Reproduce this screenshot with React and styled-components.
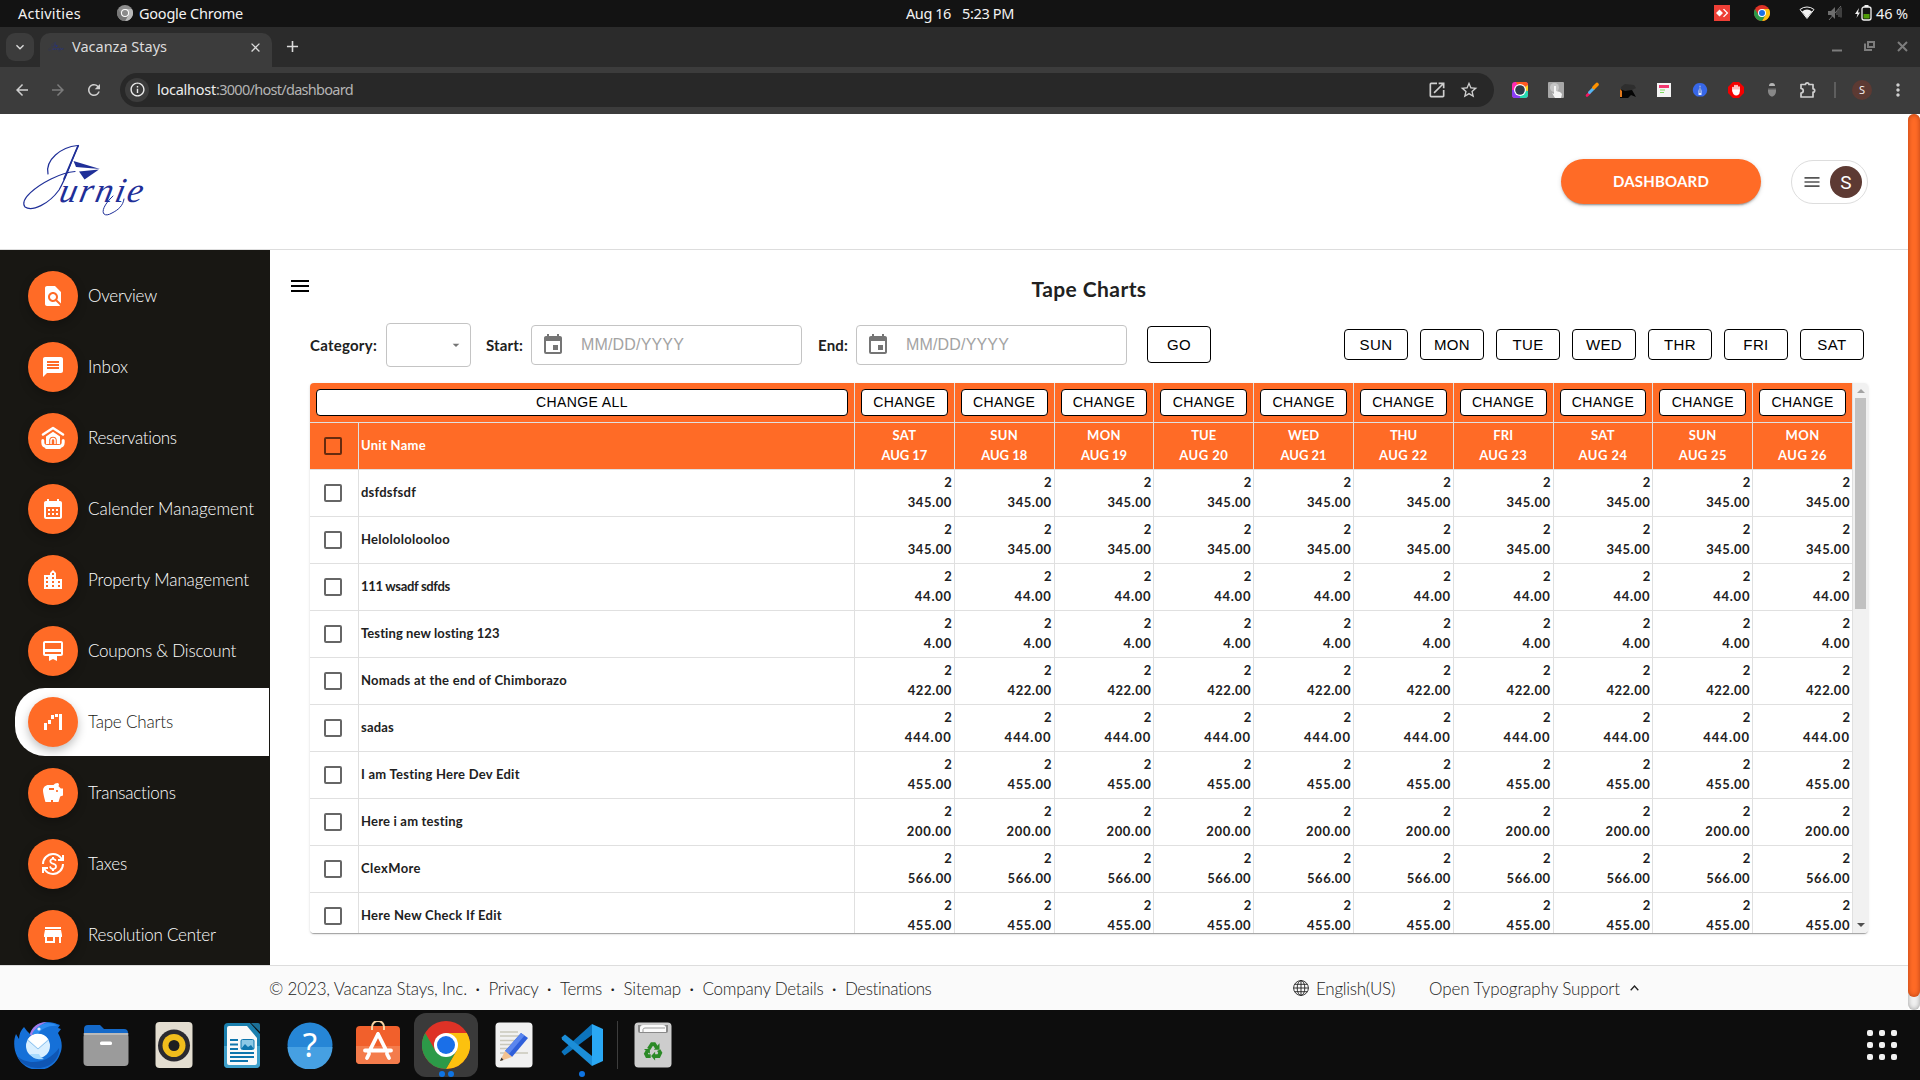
import React, { useLayoutEffect, useRef, useState } from "react";
import styled, { createGlobalStyle, css } from "styled-components";
import {
  MdFindInPage, MdMessage, MdCalendarMonth, MdLocationCity, MdCardMembership,
  MdWaterfallChart, MdSavings, MdCurrencyExchange, MdStore, MdEvent, MdMenu,
  MdArrowBack, MdArrowForward, MdRefresh, MdInfoOutline, MdOpenInNew, MdStarBorder,
  MdMoreVert, MdClose, MdAdd, MdExpandMore, MdArrowDropDown,
} from "react-icons/md";

const Global = createGlobalStyle`
  *, *::before, *::after { box-sizing: border-box; }
  body { margin: 0; overflow: hidden; background: #fff; }
  button { font: inherit; margin: 0; padding: 0; cursor: pointer; }
  svg { display: block; flex: none; }
`;

const ORANGE = "#ff6b26";
const LINE = "#e0e0e0";
const brand = css`font-family: Lato, "Open Sans", sans-serif;`;
const system = css`font-family: "Noto Sans", "Open Sans", sans-serif;`;
const arial = css`font-family: "Liberation Sans", Arial, sans-serif;`;

/* Tracks its text out or in so that the label fills a given width. */
const FitSpan = styled.span`
  display: inline-block;
  white-space: pre;
`;
function Fit({ w, children }) {
  const ref = useRef(null);
  const [spacing, setSpacing] = useState(0);
  useLayoutEffect(() => {
    const el = ref.current;
    const before = el.style.letterSpacing;
    el.style.letterSpacing = "0px";
    const natural = el.getBoundingClientRect().width;
    el.style.letterSpacing = before;
    setSpacing((w - natural) / Math.max(1, el.textContent.length));
  }, [w, children]);
  return <FitSpan ref={ref} style={{ letterSpacing: `${spacing}px` }}>{children}</FitSpan>;
}

const Screen = styled.div`
  width: 1920px;
  height: 1080px;
  display: flex;
  flex-direction: column;
  overflow: hidden;
`;

/* ---------- desktop bar ---------- */
const DesktopBar = styled.div`
  ${system}
  height: 27px;
  padding-bottom: 1px;
  background: #131313;
  color: #f2f2f2;
  font-size: 14.5px;
  display: grid;
  grid-template-columns: 1fr auto 1fr;
  align-items: center;
`;
const BarSide = styled.div`
  display: flex;
  align-items: center;
  gap: ${(p) => p.$gap}px;
  padding: ${(p) => p.$pad};
  justify-content: ${(p) => (p.$end ? "flex-end" : "flex-start")};
`;

/* ---------- browser ---------- */
const TabStrip = styled.div`
  ${system}
  height: 40px;
  background: #2b2b2b;
  display: flex;
  align-items: flex-start;
  padding: 6px 12px 0 6px;
  color: #dcdcdc;
`;
const TabSearch = styled.div`
  width: 28px;
  height: 28px;
  border-radius: 9px;
  background: #3c3c3c;
  display: grid;
  place-items: center;
`;
const Tab = styled.div`
  width: 232px;
  height: 34px;
  margin-left: 6px;
  padding: 0 9px 6px 8px;
  border-radius: 10px 10px 0 0;
  background: #3c3c3c;
  display: flex;
  align-items: center;
  gap: 8px;
  font-size: 14.5px;
`;
const TabTitle = styled.div`flex: 1; padding-bottom: 2px;`;
const NewTab = styled.div`margin: 4px 0 0 11px;`;
const WindowButtons = styled.div`
  margin: 8px 0 0 auto;
  display: flex;
  align-items: center;
  gap: 21px;
`;
const Toolbar = styled.div`
  ${system}
  height: 47px;
  background: #3c3c3c;
  display: flex;
  align-items: center;
  padding: 0 0 2px 4px;
`;
const NavSlot = styled.div`
  width: 36px;
  margin-left: ${(p) => p.$ml || 0}px;
  display: grid;
  place-items: center;
  color: ${(p) => (p.$dim ? "#7b7b7b" : "#cfcfcf")};
`;
const UrlBar = styled.div`
  width: 1374px;
  height: 34px;
  margin-left: 8px;
  margin-right: 8px;
  padding: 0 15px 0 5px;
  border-radius: 17px;
  background: #282828;
  display: flex;
  align-items: center;
  color: #ececec;
  font-size: 14.5px;
`;
const InfoDot = styled.div`
  width: 24px;
  height: 24px;
  margin-right: 8px;
  border-radius: 50%;
  background: #3c3c3c;
  display: grid;
  place-items: center;
`;
const UrlHost = styled.span`padding-bottom: 1px;`;
const UrlPath = styled.span`flex: 1; padding-bottom: 1px; color: #b4b4b4;`;
const UrlActions = styled.div`display: flex; gap: 12px; color: #cfcfcf;`;
const Divider = styled.div`width: 2px; height: 16px; margin: 0 16px 0 8px; background: #5e5e5e;`;
const Profile = styled.div`
  width: 20px;
  height: 20px;
  border-radius: 50%;
  background: #5d3a33;
  color: #f5eeec;
  font-size: 11px;
  line-height: 20px;
  text-align: center;
`;

/* ---------- page ---------- */
const Viewport = styled.div`
  height: 896px;
  display: flex;
  background: #fff;
`;
const Page = styled.div`
  width: 1908px;
  display: flex;
  flex-direction: column;
`;
const PageScroll = styled.div`
  width: 12px;
  border-radius: 10px;
  background: #f1f1f1;
  box-shadow: inset 0 0 5px #9a9a9a;
`;
const PageThumb = styled.div`
  height: 883px;
  border-radius: 10px;
  background: ${ORANGE};
  box-shadow: inset 0 0 5px rgba(120, 30, 0, 0.55);
`;
const Header = styled.header`
  height: 136px;
  border-bottom: 1px solid #dddddd;
  display: flex;
  align-items: center;
  padding: 0 40px 0 20px;
`;
const LogoLink = styled.div`padding-bottom: 3px;`;
const DashboardButton = styled.button`
  ${brand}
  width: 200px;
  height: 45px;
  margin-left: auto;
  margin-right: 30px;
  padding-bottom: 2px;
  border: 0;
  border-radius: 23px;
  background: ${ORANGE};
  color: #fff;
  font-size: 15px;
  font-weight: 700;
  box-shadow: 0 3px 1px -2px rgba(0,0,0,.2), 0 2px 2px rgba(0,0,0,.14), 0 1px 5px rgba(0,0,0,.12);
`;
const AccountPill = styled.div`
  width: 77px;
  height: 44px;
  padding: 0 5px 0 10px;
  border: 1px solid #dddddd;
  border-radius: 22px;
  display: flex;
  align-items: center;
  justify-content: space-between;
  color: #555;
`;
const Avatar = styled.div`
  width: 32px;
  height: 32px;
  border-radius: 50%;
  background: #5d3a33;
  color: #fff;
  font: 19px/33px Roboto, sans-serif;
  text-align: center;
`;
const Body = styled.div`
  height: 715px;
  display: flex;
  overflow: hidden;
`;
const Sidebar = styled.nav`
  ${brand}
  width: 270px;
  padding: 12px 1px 0 15px;
  background: #181713;
  display: flex;
  flex-direction: column;
  gap: 3px;
  overflow: hidden;
`;
const NavItem = styled.div`
  height: 68px;
  flex: none;
  padding-left: 13px;
  border-radius: 30px 0 0 30px;
  display: flex;
  align-items: center;
  gap: 10px;
  font-size: 17px;
  font-weight: 300;
  color: ${(p) => (p.$active ? "#181713" : "#fff")};
  background: ${(p) => (p.$active ? "#fff" : "transparent")};
`;
const NavLabel = styled.span`padding-bottom: 1px;`;
const NavIcon = styled.div`
  width: 50px;
  height: 50px;
  border-radius: 50%;
  background: ${ORANGE};
  color: #fff;
  display: grid;
  place-items: center;
  box-shadow: 0 4px 10px rgba(0, 0, 0, 0.25);
`;
const Main = styled.main`
  flex: 1;
  display: flex;
  flex-direction: column;
  padding: 0 40px 0 40px;
`;
const TitleRow = styled.div`
  height: 73px;
  margin: 0 -40px;
  display: grid;
  grid-template-columns: 1fr auto 1fr;
  align-items: start;
`;
const MenuToggle = styled.div`padding: 24px 0 0 18px; color: #000;`;
const Title = styled.h1`
  ${brand}
  margin: 0;
  padding-top: 25px;
  font-size: 21px;
  line-height: 28px;
  font-weight: 700;
  color: #212121;
`;
const Filters = styled.div`
  height: 44px;
  padding-right: 4px;
  display: flex;
  align-items: center;
`;
const FilterLabel = styled.label`
  ${brand}
  width: ${(p) => p.$w}px;
  margin-right: ${(p) => p.$gap}px;
  padding-bottom: 1px;
  font-size: 15px;
  font-weight: 700;
  color: #212121;
`;
const Select = styled.div`
  width: 85px;
  height: 44px;
  margin-right: 15px;
  padding-right: 6px;
  border: 1px solid #c4c4c4;
  border-radius: 4px;
  display: flex;
  align-items: center;
  justify-content: flex-end;
  color: #757575;
`;
const DateBox = styled.div`
  ${arial}
  width: 271px;
  height: 40px;
  margin-right: ${(p) => p.$gap}px;
  padding: 0 9px;
  border: 1px solid #c4c4c4;
  border-radius: 4px;
  display: flex;
  align-items: center;
  gap: 16px;
  font-size: 16px;
  color: #a3a3a3;
  svg { color: #757575; }
`;
const OutlineButton = styled.button`
  ${arial}
  width: ${(p) => p.$w || "100%"};
  height: ${(p) => p.$h}px;
  padding-bottom: 1px;
  border: 1px solid #000;
  border-radius: 4px;
  background: #fff;
  color: #000;
  font-size: ${(p) => p.$size || 15}px;
  font-weight: 400;
  letter-spacing: 0.4px;
`;
const GoSlot = styled.div`padding-bottom: 1px; display: flex;`;
const Days = styled.div`margin-left: auto; padding-bottom: 1px; display: flex; gap: 12px;`;

const TableCard = styled.div`
  height: 550px;
  margin-top: 16px;
  border-radius: 4px;
  overflow: hidden;
  display: flex;
  background: #fff;
  box-shadow: 0 2px 1px -1px rgba(0,0,0,.2), 0 1px 1px rgba(0,0,0,.14), 0 1px 3px rgba(0,0,0,.12);
`;
const Table = styled.div`
  width: 1543px;
  ${brand}
  font-size: 13px;
  font-weight: 700;
  color: #212121;
`;
const Row = styled.div`
  display: grid;
  grid-template-columns: ${(p) => (p.$wide ? "545px" : "49px 496px")} repeat(10, 1fr);
  height: ${(p) => p.$h}px;
  background: ${(p) => (p.$head ? ORANGE : "#fff")};
  color: ${(p) => (p.$head ? "#fff" : "inherit")};
`;
const Cell = styled.div`
  min-width: 0;
  border-right: 1px solid ${LINE};
  border-bottom: 1px solid ${LINE};
  padding: ${(p) => p.$pad || "0"};
  display: flex;
  flex-direction: ${(p) => (p.$stack ? "column" : "row")};
  align-items: ${(p) => p.$align || "center"};
  justify-content: ${(p) => (p.$stack ? "center" : "flex-start")};
  line-height: 20px;
`;
const Check = styled.div`
  width: 18px;
  height: 18px;
  border: 2px solid rgba(0, 0, 0, 0.6);
  border-radius: 2px;
`;
const TableScroll = styled.div`
  width: 15px;
  background: #f1f1f1;
  display: flex;
  flex-direction: column;
  align-items: center;
`;
const ScrollArrow = styled.div`
  width: 0;
  border: 4px solid transparent;
  ${(p) => p.$up
    ? "border-top: 0; border-bottom-color: #a3a3a3; margin: 6px 0 5px;"
    : "border-bottom: 0; border-top-color: #505050; margin: auto 0 6px;"}
`;
const TableThumb = styled.div`width: 11px; height: 211px; background: #c1c1c1;`;

const Footer = styled.footer`
  ${brand}
  height: 45px;
  border-top: 1px solid #dddddd;
  background: #fafafa;
  color: #222;
  font-size: 17px;
  font-weight: 300;
  display: flex;
  align-items: center;
  padding: 0 269px 0 269px;
`;
const FooterLinks = styled.div`display: flex; align-items: center;`;
const Dot = styled.span`width: 21.5px; text-align: center; font-weight: 400;`;
const FooterRight = styled.div`
  margin-left: auto;
  display: flex;
  align-items: center;
`;

/* ---------- dock ---------- */
const Dock = styled.div`
  height: 70px;
  background: #0d0d0d;
  display: flex;
  align-items: center;
  padding: 0 23px 0 4px;
`;
const DockSlot = styled.div`
  position: relative;
  width: 68px;
  height: 70px;
  display: grid;
  place-items: center;
`;
const ActiveTile = styled.div`
  width: 64px;
  height: 64px;
  border-radius: 12px;
  background: #3a3a3a;
  display: grid;
  place-items: center;
`;
const Running = styled.div`
  position: absolute;
  bottom: 3px;
  left: 0;
  right: 0;
  display: flex;
  justify-content: center;
  gap: 3px;
`;
const RunningDot = styled.i`width: 6px; height: 6px; border-radius: 50%; background: #0e74e4;`;
const DockRule = styled.div`width: 1px; height: 48px; background: #3d3d3d; margin: 0 1px;`;
const AppsGrid = styled.div`
  margin-left: auto;
  display: grid;
  grid-template-columns: repeat(3, 6px);
  gap: 6px;
  width: 30px;
`;
const AppsDot = styled.i`width: 6px; height: 6px; border-radius: 2px; background: #f2f2f2;`;

/* ---------- drawings ---------- */
const Chrome = ({ size, gray }) => {
  const [r, y, g, b] = gray ? ["#8d8d8d", "#b9b9b9", "#777", "#8a8a8a"] : ["#de3226", "#fcc10f", "#2c9a48", "#1a6fe8"];
  return (
    <svg width={size} height={size} viewBox="0 0 48 48">
      <circle cx="24" cy="24" r="24" fill={r} />
      <path d="M24 12h20.8A24 24 0 0 1 24 48l10.4-18z" fill={y} />
      <path d="M3.2 12A24 24 0 0 0 24 48l10.4-18L24 34 13.6 30z" fill={g} />
      <circle cx="24" cy="24" r="12" fill="#fff" />
      <circle cx="24" cy="24" r="9" fill={b} />
    </svg>
  );
};

const Logo = ({ width = 126, height = 80 }) => (
  <svg width={width} height={height} viewBox="0 0 126 80" fill="none" stroke="#1f2f98" strokeLinecap="round">
    <path d="M28 34C25 20 41 7 57.500 5.500" strokeWidth="1.200" />
    <path d="M58.500 5.500C51 20 48 35 39 50C29 64 12 72 5 67C-1 59 17 46 31 39C39 35 47 32 55 31.500" strokeWidth="1.200" />
    <path d="M58 6L44 39" strokeWidth="1.800" />
    <path d="M53.500 21L80 29L62 27.500L56 27Z" fill="#1f2f98" stroke="none" />
    <path d="M59 31.500L79 29.500L64.500 39.500Z" fill="#1f2f98" stroke="none" />
    <path d="M93 56C78 70 82 79 92 73C98 70 103 66 104 59" strokeWidth="1" />
    <text transform="translate(38 62) skewX(-12)" fill="#1f2f98" stroke="none" fontFamily="Liberation Serif, serif" fontStyle="italic" fontSize="35" textLength="83">urnie</text>
  </svg>
);

const PuzzleIcon = () => (
  <svg width="18" height="18" viewBox="0 0 18 18" fill="none" stroke="currentColor" strokeWidth="1.700" strokeLinejoin="round">
    <path d="M2 3.500h4.500a1.700 1.700 0 0 1 3.400 0H14v4.300a1.700 1.700 0 0 1 0 3.400V16H2v-3.800c3-.6 3-4.200 0-4.800z" />
  </svg>
);

const HouseIcon = () => (
  <svg width="24" height="24" viewBox="0 0 24 24" fill="none" stroke="#fff">
    <path d="M2 8.500L12 2l10 6.500" strokeWidth="2.600" strokeLinecap="round" strokeLinejoin="round" />
    <path d="M5 18v-7.500L12 5.800l7 4.700V18h-3.200v-3.500a3.800 3.800 0 0 0-7.600 0V18z" fill="#fff" stroke="none" />
    <path d="M10 18v-3.500a2 2 0 0 1 4 0V18" strokeWidth="1.500" />
    <path d="M1.800 14.500v2c0 3 2 4 4.700 4h11c2.700 0 4.700-1 4.700-4v-2" strokeWidth="3" strokeLinecap="round" />
    <path d="M5.500 21.500h13" strokeWidth="3" strokeLinecap="round" />
  </svg>
);

const Globe = () => (
  <svg width="16" height="16" viewBox="0 0 16 16" fill="none" stroke="#222" strokeWidth="0.900">
    <circle cx="8" cy="8" r="7.400" />
    <ellipse cx="8" cy="8" rx="3.800" ry="7.400" />
    <path d="M8 .5v15M.5 8h15M1.800 4.300h12.400M1.800 11.700h12.400" />
  </svg>
);

const Thunderbird = () => (
  <svg width="48" height="48" viewBox="0 0 48 48">
    <path d="M10 6c2 3 4 5 6 7 2-7 8-12 17-12 5 0 8 1 10 2l3 1-2 3 3 1-3 4c4 7 5 14 2 21a23 23 0 0 1-43 2C0 29-1 20 2 13l3 5c0-5 2-9 5-12z" fill="#1570d8" />
    <path d="M16 13c2-7 8-12 17-12-5 2-8 4-10 8l-6 6z" fill="#a77be8" />
    <path d="M18 13c3-6 8-10 16-11 4 0 7 1 10 3-8-1-16 2-20 8z" fill="#2d8cf0" />
    <path d="M3 35c9 9 30 9 42-8 1 10-8 20-21 20-9 0-17-4-21-12z" fill="#0f56b4" />
    <circle cx="25" cy="8" r="1.600" fill="#e9f4ff" />
    <circle cx="24" cy="25" r="12" fill="#d9efff" />
    <path d="M16 33c3 5 9 6 14 5-3-1-4-3-5-5z" fill="#a9dcff" />
    <path d="M14 18l10 9 10-9c-4-7-16-7-20 0z" fill="#fff" />
    <path d="M13.500 19L24 28l10.500-9" stroke="#8fc2ee" fill="none" />
  </svg>
);
const FilesIcon = () => (
  <svg width="48" height="48" viewBox="0 0 48 48">
    <path d="M2 8a4 4 0 0 1 4-4h12l4 4h20a4 4 0 0 1 4 4v8H2z" fill="#1469c9" />
    <rect x="1.500" y="12" width="45" height="33" rx="4" fill="#9b9b9b" />
    <rect x="1.500" y="12" width="45" height="2" rx="1" fill="#b9b9b9" />
    <rect x="18" y="20.500" width="12" height="3.500" rx="1.500" fill="#fff" />
  </svg>
);
const SpeakerIcon = () => (
  <svg width="48" height="48" viewBox="0 0 48 48">
    <rect x="5.500" y="1" width="37" height="46" rx="4" fill="#e3ddd0" />
    <circle cx="24" cy="24.500" r="16" fill="#2a2a30" />
    <circle cx="24" cy="24.500" r="11.500" fill="#f0bd1c" />
    <circle cx="24" cy="24.500" r="5.500" fill="#1e1e20" />
  </svg>
);
const WriterIcon = () => (
  <svg width="48" height="48" viewBox="0 0 48 48">
    <path d="M10 2h22l10 11v30a4 4 0 0 1-4 4H10a4 4 0 0 1-4-4V6a4 4 0 0 1 4-4z" fill="#1a7fae" />
    <path d="M6 25h36v18a4 4 0 0 1-4 4H10a4 4 0 0 1-4-4z" fill="#3e9fca" />
    <path d="M33 2h7a2 2 0 0 1 2 2v7z" fill="#1c6f96" />
    <path d="M11 5h18l10 12v25a2 2 0 0 1-2 2H11a2 2 0 0 1-2-2V7a2 2 0 0 1 2-2z" fill="#fafafa" />
    <path d="M12 19h8M12 23.500h8M12 28h8M12 32h24M12 36h24M12 40h18" stroke="#0f76ae" strokeWidth="2" />
    <rect x="23" y="18.500" width="13" height="10" rx="1.500" fill="#8cc8e6" stroke="#0f76ae" />
    <path d="M23 28l4-5 3 3 3-2 3 4z" fill="#0f76ae" />
  </svg>
);
const HelpIcon = () => (
  <svg width="48" height="48" viewBox="0 0 48 48">
    <circle cx="24" cy="24" r="22.500" fill="#2686d6" />
    <path d="M1.500 26a22.500 22.500 0 0 0 45 0z" fill="#46a0e2" />
    <text x="24" y="36" textAnchor="middle" fill="#fff" fontFamily="Noto Sans, sans-serif" fontSize="33">?</text>
  </svg>
);
const SoftwareIcon = () => (
  <svg width="48" height="48" viewBox="0 0 48 48">
    <rect x="2" y="5" width="44" height="38" rx="4" fill="#f1602c" />
    <path d="M2 25h44v14a4 4 0 0 1-4 4H6a4 4 0 0 1-4-4z" fill="#f47c4c" />
    <path d="M18 9V6a6 6 0 0 1 12 0v3" fill="none" stroke="#f8d3a2" strokeWidth="2" />
    <path d="M24 13l-9 18M24 13l9 18M11 29.500h26M15 33l-2 4M33 33l2 4" fill="none" stroke="#fff" strokeWidth="3.800" strokeLinecap="round" />
  </svg>
);
const EditorIcon = () => (
  <svg width="48" height="48" viewBox="0 0 48 48">
    <rect x="5.500" y="1.500" width="37" height="45" rx="4" fill="#f1f1f1" />
    <path d="M10 11h18M10 15h22M10 19.500h18M10 23.500h16M10 27.500h12M10 32h28" stroke="#c9c8bb" strokeWidth="1.600" />
    <path d="M31 12l7 5-16 19-7-6z" fill="#2f5fda" />
    <path d="M31 12l3.500 2.500-16 19L15 30z" fill="#5b86ee" />
    <path d="M15 30l7 6-12 4z" fill="#f3c291" />
    <path d="M11.500 36.500L10 40l3.500-1z" fill="#333" />
  </svg>
);
const CodeIcon = () => (
  <svg width="44" height="44" viewBox="0 0 44 44">
    <path d="M1.500 29l3 3.500L32 12V1L2 28z" fill="#0c74bd" />
    <path d="M1.500 14.500l3.500-3L32 33v10L2 16.500z" fill="#1b8ed8" />
    <path d="M32 1l11 5v32l-11 5z" fill="#2aa8f4" />
  </svg>
);
const TrashIcon = () => (
  <svg width="48" height="48" viewBox="0 0 48 48">
    <rect x="5.500" y="1.500" width="37" height="45" rx="4" fill="#cdcdcd" />
    <path d="M9 4h30v6a2 2 0 0 1-2 2H11a2 2 0 0 1-2-2z" fill="#8a8a8a" />
    <path d="M11 11V7a3 3 0 0 1 3-3h20a3 3 0 0 1 3 3v4z" fill="#fafafa" />
    <path d="M14 11V8.500a2 2 0 0 1 2-1.500h20" fill="none" stroke="#999" />
    <g transform="translate(4.500 5.500) scale(.8)">
      <g fill="none" stroke="#2c8a27" strokeWidth="4.600">
        <path d="M19 28l4-6h3l3 4.500" />
        <path d="M31.500 29.500l2 3.500-2 4h-5" />
        <path d="M21.500 37H17l-1.500-3 2-3.500" />
      </g>
      <path d="M32.500 21v8h-7zM27 31.500v11l-5-5.500zM13 28h7.500v6z" fill="#2c8a27" />
    </g>
  </svg>
);

const extensions = [
  <svg key="cam" width="16" height="16" viewBox="0 0 16 16">
    <rect width="16" height="16" rx="3" fill="#ff2bb0" />
    <path d="M8 8L4 0h9a3 3 0 0 1 3 3z" fill="#ff5a1f" />
    <path d="M8 8l8-5v6z" fill="#ffd21f" />
    <path d="M8 8l8 1v4a3 3 0 0 1-3 3H8z" fill="#24d9b0" />
    <path d="M8 16H3a3 3 0 0 1-3-3V8h8z" fill="#8a3cf5" />
    <circle cx="8" cy="8" r="6" fill="#fff" />
    <circle cx="8" cy="8" r="4.800" fill="#2f3a48" />
  </svg>,
  <svg key="tap" width="16" height="16" viewBox="0 0 16 16">
    <rect width="16" height="16" rx="1" fill="#a7a7a7" />
    <circle cx="6.500" cy="5.500" r="4.500" fill="#c6c6c6" />
    <path d="M6 4h2v5l4 1 2 2-1 4H7l-3-5 2 1z" fill="#f5f5f5" />
  </svg>,
  <svg key="pick" width="16" height="16" viewBox="0 0 16 16" strokeLinecap="round">
    <path d="M3 13.500l2.500-2.500" stroke="#f5155e" strokeWidth="2.600" />
    <path d="M5.500 10.500l4-4" stroke="#55b6f2" strokeWidth="3" />
    <path d="M10 5.500l3-3" stroke="#ff9200" strokeWidth="3.600" />
  </svg>,
  <svg key="hat" width="16" height="16" viewBox="0 0 16 16">
    <path d="M1 5l4-3 9 1 2 3-6 3H2z" fill="#2e2e2e" />
    <path d="M0 7l5 2 7-1 4 7-5-2-3 3H0z" fill="#050505" />
    <path d="M0 7l2 2v6H0z" fill="#e2791c" />
  </svg>,
  <svg key="form" width="16" height="16" viewBox="0 0 16 16">
    <rect x="1" y="1" width="14" height="14" fill="#f4f4f4" />
    <rect x="3" y="3" width="10" height="3" fill="#f3386f" />
    <path d="M4 8h5M4 10.500h4" stroke="#7fdb5e" />
  </svg>,
  <svg key="blue" width="16" height="16" viewBox="0 0 16 16">
    <path d="M8 1a7 7 0 0 1 5 12l-2 1.500H5L3 13A7 7 0 0 1 8 1z" fill="#3767e8" />
    <path d="M8 3l1.500 6v4h-3V9z" fill="#e9f0ff" />
    <path d="M8 5v6" stroke="#2246a8" />
  </svg>,
  <svg key="stop" width="16" height="16" viewBox="0 0 16 16">
    <path d="M5 0h6l5 5v6l-5 5H5l-5-5V5z" fill="#f40000" />
    <path d="M5 9V5.500M7 8V3.500M9 8V3.500M11 9V5" stroke="#fff" strokeWidth="1.500" strokeLinecap="round" />
    <path d="M4.500 7.500h7.200V10c0 2-1.500 3.500-3.500 3.500S4.500 11.500 4.500 9.500z" fill="#fff" />
  </svg>,
  <svg key="spy" width="16" height="16" viewBox="0 0 16 16">
    <path d="M5 4a3 3 0 0 1 6 0z" fill="#b5b5b5" />
    <path d="M4 6h8v3c0 3-2 5.500-4 5.500S4 12 4 9z" fill="#888" />
    <path d="M4 6h8v1.500H4z" fill="#555" />
  </svg>,
];

/* ---------- data ---------- */
const NAV = [
  ["Overview", 69, MdFindInPage],
  ["Inbox", 40, MdMessage],
  ["Reservations", 89, HouseIcon],
  ["Calender Management", 166, MdCalendarMonth],
  ["Property Management", 161, MdLocationCity],
  ["Coupons & Discount", 148, MdCardMembership],
  ["Tape Charts", 85, MdWaterfallChart, true],
  ["Transactions", 88, MdSavings],
  ["Taxes", 39, MdCurrencyExchange],
  ["Resolution Center", 128, MdStore],
];
const DATES = [
  ["SAT", 24, "AUG 17", 46], ["SUN", 28, "AUG 18", 46], ["MON", 34, "AUG 19", 46],
  ["TUE", 25, "AUG 20", 49], ["WED", 31, "AUG 21", 46], ["THU", 27, "AUG 22", 49],
  ["FRI", 20, "AUG 23", 48], ["SAT", 24, "AUG 24", 49], ["SUN", 28, "AUG 25", 48],
  ["MON", 34, "AUG 26", 49],
];
const UNITS = [
  ["dsfdsfsdf", 55, "345.00", 44],
  ["Helolololooloo", 89, "345.00", 44],
  ["111 wsadf sdfds", 89, "44.00", 37],
  ["Testing new losting 123", 139, "4.00", 28],
  ["Nomads at the end of Chimborazo", 206, "422.00", 44],
  ["sadas", 33, "444.00", 47],
  ["I am Testing Here Dev Edit", 159, "455.00", 44],
  ["Here i am testing", 102, "200.00", 45],
  ["ClexMore", 60, "566.00", 44],
  ["Here New Check If Edit", 141, "455.00", 44],
];
const FOOTER = [
  ["© 2023, Vacanza Stays, Inc.", 198], ["Privacy", 50], ["Terms", 42],
  ["Sitemap", 57.5], ["Company Details", 121], ["Destinations", 87],
];
const WEEK = ["SUN", "MON", "TUE", "WED", "THR", "FRI", "SAT"];

export default function App() {
  return (
    <Screen>
      <Global />
      <DesktopBar>
        <BarSide $gap={0} $pad="0 0 0 18px">
          <Fit w={63}>Activities</Fit>
          <BarSide $gap={6} $pad="0 0 0 36px">
            <Chrome size={16} gray />
            <Fit w={104}>Google Chrome</Fit>
          </BarSide>
        </BarSide>
        <BarSide $gap={11} $pad="0"><Fit w={45}>Aug 16</Fit><Fit w={52}>5:23 PM</Fit></BarSide>
        <BarSide $gap={0} $pad="0 12px 0 0" $end>
          <svg width="16" height="16" viewBox="0 0 16 16">
            <rect width="16" height="16" fill="#ee3f36" />
            <path d="M5.500 4.500L9 8l-3.500 3.500L2 8zM9 4.500L12.500 8 9 11.500l1 .8L14.300 8 10 3.700z" fill="#fff" />
          </svg>
          <BarSide $gap={29} $pad="0 4px 0 24px">
            <Chrome size={16} />
            <BarSide $gap={12} $pad="0">
              <svg width="16" height="14" viewBox="0 0 16 14">
                <path d="M1 3.500a11 11 0 0 1 14 0L8 12.500z" fill="none" stroke="#f2f2f2" />
                <path d="M3 5.500a8 8 0 0 1 10 0L8 12z" fill="#f2f2f2" />
              </svg>
              <svg width="16" height="16" viewBox="0 0 16 16" fill="none" stroke="#6d6d6d">
                <path d="M1 6h3l4-4v12l-4-4H1z" fill="#6d6d6d" stroke="none" />
                <path d="M10 6v4M12 4v8M14 2.500v10M2 15L14 1" />
              </svg>
              <svg width="17" height="16" viewBox="0 0 17 16">
                <path d="M4 3L0 9h2.500L1.500 13 5 7.500H3z" fill="#f2f2f2" />
                <rect x="7" y="2" width="9" height="13" rx="2" fill="none" stroke="#f2f2f2" strokeWidth="1.300" />
                <rect x="9.500" y="0" width="4" height="2" fill="#f2f2f2" />
                <rect x="8.500" y="9" width="6" height="4.500" fill="#4e9a06" />
              </svg>
            </BarSide>
          </BarSide>
          <Fit w={32}>46 %</Fit>
        </BarSide>
      </DesktopBar>

      <TabStrip>
        <TabSearch><MdExpandMore size={16} /></TabSearch>
        <Tab>
          <Logo width={16} height={16} />
          <TabTitle><Fit w={95}>Vacanza Stays</Fit></TabTitle>
          <MdClose size={15} />
        </Tab>
        <NewTab><MdAdd size={19} /></NewTab>
        <WindowButtons>
          <svg width="11" height="11" viewBox="0 0 11 11"><path d="M0 9.500h10" stroke="#7d7d7d" strokeWidth="2" /></svg>
          <svg width="12" height="11" viewBox="0 0 12 11" fill="none" stroke="#7d7d7d" strokeWidth="2"><path d="M4 1h6v5H4zM1 2.500V9h7" /></svg>
          <svg width="11" height="11" viewBox="0 0 11 11" stroke="#7d7d7d" strokeWidth="2"><path d="M1 1l9 9M10 1l-9 9" /></svg>
        </WindowButtons>
      </TabStrip>

      <Toolbar>
        <NavSlot><MdArrowBack size={18} /></NavSlot>
        <NavSlot $dim><MdArrowForward size={18} /></NavSlot>
        <NavSlot><MdRefresh size={18} /></NavSlot>
        <UrlBar>
          <InfoDot><MdInfoOutline size={17} /></InfoDot>
          <UrlHost><Fit w={59}>localhost</Fit></UrlHost>
          <UrlPath><Fit w={137}>:3000/host/dashboard</Fit></UrlPath>
          <UrlActions><MdOpenInNew size={20} /><MdStarBorder size={20} /></UrlActions>
        </UrlBar>
        {extensions.map((icon, i) => <NavSlot key={i}>{icon}</NavSlot>)}
        <NavSlot><PuzzleIcon /></NavSlot>
        <Divider />
        <Profile>S</Profile>
        <NavSlot $ml={8}><MdMoreVert size={20} /></NavSlot>
      </Toolbar>

      <Viewport>
        <Page>
          <Header>
            <LogoLink><Logo /></LogoLink>
            <DashboardButton><Fit w={96}>DASHBOARD</Fit></DashboardButton>
            <AccountPill><MdMenu size={20} /><Avatar>S</Avatar></AccountPill>
          </Header>
          <Body>
            <Sidebar>
              {NAV.map(([label, w, Icon, active]) => (
                <NavItem key={label} $active={active}>
                  <NavIcon><Icon size={24} /></NavIcon>
                  <NavLabel><Fit w={w}>{label}</Fit></NavLabel>
                </NavItem>
              ))}
            </Sidebar>
            <Main>
              <TitleRow>
                <MenuToggle><MdMenu size={24} /></MenuToggle>
                <Title><Fit w={115}>Tape Charts</Fit></Title>
              </TitleRow>
              <Filters>
                <FilterLabel $w={67} $gap={9}><Fit w={67}>Category:</Fit></FilterLabel>
                <Select><MdArrowDropDown size={16} /></Select>
                <FilterLabel $w={37} $gap={8}><Fit w={37}>Start:</Fit></FilterLabel>
                <DateBox $gap={16}><MdEvent size={24} /><Fit w={103}>MM/DD/YYYY</Fit></DateBox>
                <FilterLabel $w={29} $gap={9}><Fit w={30}>End:</Fit></FilterLabel>
                <DateBox $gap={20}><MdEvent size={24} /><Fit w={103}>MM/DD/YYYY</Fit></DateBox>
                <GoSlot><OutlineButton $w="64px" $h={37}>GO</OutlineButton></GoSlot>
                <Days>
                  {WEEK.map((d) => <OutlineButton key={d} $w="64px" $h={31}>{d}</OutlineButton>)}
                </Days>
              </Filters>
              <TableCard>
                <Table>
                  <Row $head $wide $h={40}>
                    <Cell $pad="6px" $align="flex-start"><OutlineButton $h={27} $size={14}>CHANGE ALL</OutlineButton></Cell>
                    {DATES.map((d) => (
                      <Cell key={d[2]} $pad="6px" $align="flex-start"><OutlineButton $h={27} $size={14}>CHANGE</OutlineButton></Cell>
                    ))}
                  </Row>
                  <Row $head $h={47}>
                    <Cell $pad="0 0 0 14px"><Check /></Cell>
                    <Cell $pad="0 0 2px 2px"><Fit w={65}>Unit Name</Fit></Cell>
                    {DATES.map(([day, w1, date, w2]) => (
                      <Cell key={date} $stack $pad="0 0 2px"><Fit w={w1}>{day}</Fit><Fit w={w2}>{date}</Fit></Cell>
                    ))}
                  </Row>
                  {UNITS.map(([name, w, price, pw], i) => (
                    <Row key={i} $h={47}>
                      <Cell $pad="0 0 0 14px"><Check /></Cell>
                      <Cell $pad="0 0 2px 2px"><Fit w={w}>{name}</Fit></Cell>
                      {DATES.map((d) => (
                        <Cell key={d[2]} $stack $align="flex-end" $pad="0 2px 2px 0">
                          <span>2</span><Fit w={pw}>{price}</Fit>
                        </Cell>
                      ))}
                    </Row>
                  ))}
                </Table>
                <TableScroll><ScrollArrow $up /><TableThumb /><ScrollArrow /></TableScroll>
              </TableCard>
            </Main>
          </Body>
          <Footer>
            <FooterLinks>
              {FOOTER.map(([text, w], i) => (
                <React.Fragment key={text}>
                  {i > 0 && <Dot>·</Dot>}
                  <Fit w={w}>{text}</Fit>
                </React.Fragment>
              ))}
            </FooterLinks>
            <FooterRight>
              <BarSide $gap={7} $pad="0 34px 0 0"><Globe /><Fit w={79}>English(US)</Fit></BarSide>
              <BarSide $gap={10} $pad="0">
                <Fit w={191}>Open Typography Support</Fit>
                <svg width="9" height="6" viewBox="0 0 9 6"><path d="M.7 5.300L4.500 1l3.800 4.300" fill="none" stroke="#222" strokeWidth="1.300" /></svg>
              </BarSide>
            </FooterRight>
          </Footer>
        </Page>
        <PageScroll><PageThumb /></PageScroll>
      </Viewport>

      <Dock>
        <DockSlot><Thunderbird /></DockSlot>
        <DockSlot><FilesIcon /></DockSlot>
        <DockSlot><SpeakerIcon /></DockSlot>
        <DockSlot><WriterIcon /></DockSlot>
        <DockSlot><HelpIcon /></DockSlot>
        <DockSlot><SoftwareIcon /></DockSlot>
        <DockSlot>
          <ActiveTile><Chrome size={48} /></ActiveTile>
          <Running><RunningDot /><RunningDot /></Running>
        </DockSlot>
        <DockSlot><EditorIcon /></DockSlot>
        <DockSlot><CodeIcon /><Running><RunningDot /></Running></DockSlot>
        <DockRule />
        <DockSlot><TrashIcon /></DockSlot>
        <AppsGrid>{Array.from({ length: 9 }, (_, i) => <AppsDot key={i} />)}</AppsGrid>
      </Dock>
    </Screen>
  );
}
